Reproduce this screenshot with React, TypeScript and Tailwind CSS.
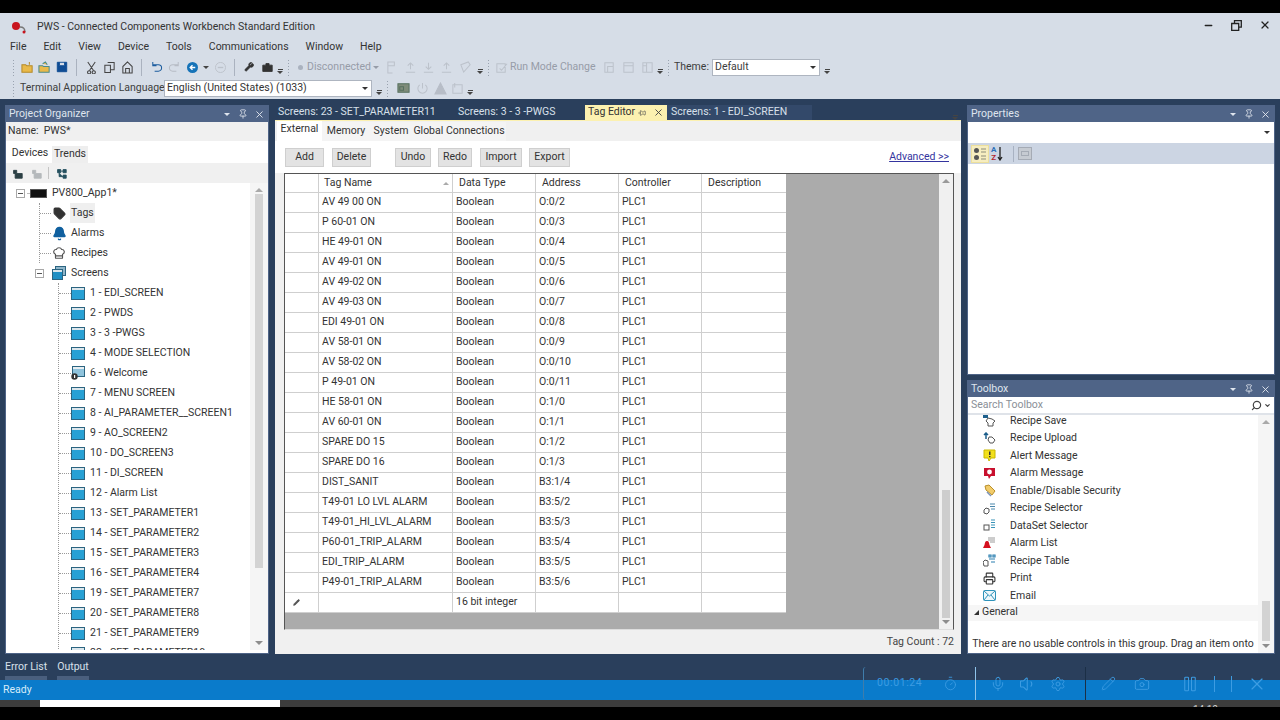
import { Bell, Camera, ChefHat, ChevronDown, Mic, Minus, Pause, Pencil, Pin, Printer, Search, Settings, Tag, Timer, Volume1, X } from "lucide-react"

const tags = [
  ["AV 49 00 ON", "O:0/2"],
  ["P 60-01 ON", "O:0/3"],
  ["HE 49-01 ON", "O:0/4"],
  ["AV 49-01 ON", "O:0/5"],
  ["AV 49-02 ON", "O:0/6"],
  ["AV 49-03 ON", "O:0/7"],
  ["EDI 49-01 ON", "O:0/8"],
  ["AV 58-01 ON", "O:0/9"],
  ["AV 58-02 ON", "O:0/10"],
  ["P 49-01 ON", "O:0/11"],
  ["HE 58-01 ON", "O:1/0"],
  ["AV 60-01 ON", "O:1/1"],
  ["SPARE DO 15", "O:1/2"],
  ["SPARE DO 16", "O:1/3"],
  ["DIST_SANIT", "B3:1/4"],
  ["T49-01 LO LVL ALARM", "B3:5/2"],
  ["T49-01_HI_LVL_ALARM", "B3:5/3"],
  ["P60-01_TRIP_ALARM", "B3:5/4"],
  ["EDI_TRIP_ALARM", "B3:5/5"],
  ["P49-01_TRIP_ALARM", "B3:5/6"],
]

const screens = [
  "1 - EDI_SCREEN",
  "2 - PWDS",
  "3 - 3 -PWGS",
  "4 - MODE SELECTION",
  "6 - Welcome",
  "7 - MENU SCREEN",
  "8 - AI_PARAMETER__SCREEN1",
  "9 - AO_SCREEN2",
  "10 - DO_SCREEN3",
  "11 - DI_SCREEN",
  "12 - Alarm List",
  "13 - SET_PARAMETER1",
  "14 - SET_PARAMETER2",
  "15 - SET_PARAMETER3",
  "16 - SET_PARAMETER4",
  "19 - SET_PARAMETER7",
  "20 - SET_PARAMETER8",
  "21 - SET_PARAMETER9",
  "22 - SET_PARAMETER10",
]

const menus = ["File", "Edit", "View", "Device", "Tools", "Communications", "Window", "Help"]

function WindowIcon() {
  return (
    <svg width="14" height="13" viewBox="0 0 14 13" className="shrink-0">
      <rect x="0.5" y="0.5" width="13" height="12" fill="#27a0d4" stroke="#2b6480" />
      <rect x="1" y="1" width="12" height="2" fill="#dbe6ec" />
    </svg>
  )
}

function WelcomeIcon() {
  return (
    <svg width="14" height="14" viewBox="0 0 14 14" className="shrink-0">
      <rect x="1.5" y="0.5" width="12" height="10" fill="#8fc3dc" stroke="#2b6480" />
      <rect x="2" y="1" width="11" height="2" fill="#e8eef2" />
      <circle cx="3.5" cy="10.5" r="3.2" fill="#333" />
      <rect x="3" y="9" width="1.2" height="3" fill="#fff" />
    </svg>
  )
}

function ScreensIcon() {
  return (
    <svg width="14" height="14" viewBox="0 0 14 14" className="shrink-0">
      <rect x="3.5" y="0.5" width="10" height="9" fill="#8fb5c9" stroke="#2b6480" />
      <rect x="0.5" y="3.5" width="10" height="10" fill="#1f8fc4" stroke="#2b6480" />
      <rect x="1" y="4" width="9" height="2" fill="#dbe6ec" />
    </svg>
  )
}

function Expander({ className }: { className?: string }) {
  return (
    <span className={`flex h-[9px] w-[9px] shrink-0 items-center justify-center border border-[#a8a8a8] bg-white ${className ?? ""}`}>
      <span className="h-px w-[5px] bg-[#555]" />
    </span>
  )
}

function Grip() {
  return <span className="mx-[3px] h-[17px] w-[4px] shrink-0 bg-[radial-gradient(#9aa3b0_1px,transparent_1px)] bg-[length:3px_3px]" />
}

function Overflow() {
  return (
    <span className="flex h-[18px] w-[8px] shrink-0 flex-col items-center justify-end pb-[2px]">
      <span className="mb-px h-px w-[5px] bg-[#444]" />
      <span className="h-0 w-0 border-x-[3px] border-t-[3px] border-x-transparent border-t-[#444]" />
    </span>
  )
}

function Sep() {
  return <span className="mx-[5px] h-[17px] w-px shrink-0 bg-[#aab2bf]" />
}

function Tb({ children, w = "w-[18px]" }: { children?: React.ReactNode; w?: string }) {
  return <span className={`flex h-[18px] shrink-0 items-center justify-center ${w}`}>{children}</span>
}

function Gly({ d, fill = "none", stroke = "#444", size = 13 }: { d: string; fill?: string; stroke?: string; size?: number }) {
  return (
    <svg width={size} height={size} viewBox="0 0 14 14">
      <path d={d} fill={fill} stroke={stroke} strokeWidth="1.1" />
    </svg>
  )
}

function PanelHeader({ title }: { title: string }) {
  return (
    <div className="flex h-[16px] shrink-0 items-center bg-[#4f6487] pl-[3px] pr-[3px] text-[#dfe5ee]">
      <span className="flex-1">{title}</span>
      <span className="mr-[8px] h-0 w-0 border-x-[3px] border-t-[3px] border-x-transparent border-t-[#dfe5ee]" />
      <Pin size={10} className="mr-[6px] text-[#e2e7ef]" />
      <X size={11} className="text-[#e2e7ef]" />
    </div>
  )
}

function ScrollBar({ thumb, top, w = "w-[16px]" }: { thumb: string; top: string; w?: string }) {
  return (
    <div className={`flex shrink-0 flex-col items-center self-stretch bg-[#f5f5f5] ${w}`}>
      <span className="mt-[5px] h-0 w-0 border-x-[4px] border-b-[4px] border-x-transparent border-b-[#a9a9a9]" />
      <div className={`flex min-h-0 w-[8px] flex-1 flex-col ${top}`}>
        <div className={`w-full shrink-0 bg-[#d3d3d3] ${thumb}`} />
      </div>
      <span className="mb-[5px] h-0 w-0 border-x-[4px] border-t-[4px] border-x-transparent border-t-[#8d8d8d]" />
    </div>
  )
}

function Btn({ label, w, ml }: { label: string; w: string; ml: string }) {
  return (
    <span className={`flex h-[19px] items-center justify-center border border-[#cfcfcf] bg-[#e3e3e3] ${w} ${ml}`}>{label}</span>
  )
}

function Cell({ w, children, border = true }: { w: string; children?: React.ReactNode; border?: boolean }) {
  return (
    <span className={`flex h-full shrink-0 items-center overflow-hidden whitespace-nowrap pl-[3px] ${w} ${border ? "border-r border-[#cfcfcf]" : ""}`}>
      {children}
    </span>
  )
}

const tools: [string, React.ReactNode][] = [
  [
    "Recipe Save",
    <svg width="13" height="13" viewBox="0 0 13 13"><rect x="0" y="0" width="5" height="4" fill="#1d5f8c" /><path d="M5 4l4 1 3 2-2 2v3H5V9L3 7z" fill="#fff" stroke="#555" /></svg>,
  ],
  [
    "Recipe Upload",
    <svg width="13" height="13" viewBox="0 0 13 13"><path d="M3 7V1M1 3l2-2 2 2" fill="none" stroke="#1d5f8c" strokeWidth="1.5" /><path d="M6 5h3l3 3-2 3H7L5 8z" fill="#fff" stroke="#555" /></svg>,
  ],
  [
    "Alert Message",
    <svg width="13" height="13" viewBox="0 0 13 13"><path d="M1 1h11v8H8l-2 3-1-3H1z" fill="#f2e01c" stroke="#c8b800" /><rect x="6" y="2.5" width="1.5" height="3.5" fill="#333" /><rect x="6" y="7" width="1.5" height="1.3" fill="#333" /></svg>,
  ],
  [
    "Alarm Message",
    <svg width="13" height="13" viewBox="0 0 13 13"><path d="M1 1h11v8H8l-2 3-1-3H1z" fill="#c8102e" /><circle cx="6.5" cy="5" r="2.4" fill="#fff" /></svg>,
  ],
  [
    "Enable/Disable Security",
    <svg width="13" height="13" viewBox="0 0 13 13"><path d="M2 2l4-1 6 6-3 4-6-5z" fill="#f2cc6a" stroke="#b98f2a" /><path d="M4 8l4 4" stroke="#7b93b8" strokeWidth="1.5" /></svg>,
  ],
  [
    "Recipe Selector",
    <svg width="13" height="13" viewBox="0 0 13 13"><path d="M1 8l2-2 3 1v3l-2 2-3-1z" fill="#fff" stroke="#555" /><path d="M7 2h5M7 4.5h5M8 7h4" stroke="#4a87ab" strokeWidth="1.2" /></svg>,
  ],
  [
    "DataSet Selector",
    <svg width="13" height="13" viewBox="0 0 13 13"><rect x="1" y="6" width="5" height="5" fill="#fff" stroke="#555" /><path d="M8 1h4M8 3.5h4M8 6h4M8 8.5h4" stroke="#3a93b8" strokeWidth="1.2" /></svg>,
  ],
  [
    "Alarm List",
    <svg width="13" height="13" viewBox="0 0 13 13"><path d="M5 1h7M5 3h7M7 5h5" stroke="#9a9a9a" strokeWidth="1" /><path d="M4 4c2 0 2 2 2.5 4L8 11H0l1.5-3C2 6 2 4 4 4z" fill="#d5101f" /></svg>,
  ],
  [
    "Recipe Table",
    <svg width="13" height="13" viewBox="0 0 13 13"><path d="M0 8l2-2 3 1v5H1z" fill="#fff" stroke="#555" /><path d="M6 1h2v2H6zM10 1h2v2h-2zM6 5h6M8 8h4" stroke="#2a7fb0" strokeWidth="1.2" fill="none" /></svg>,
  ],
  ["Print", <Printer size={13} className="text-[#333]" />],
  [
    "Email",
    <svg width="13" height="11" viewBox="0 0 13 11"><rect x="0.5" y="0.5" width="12" height="10" rx="1" fill="#eef7fb" stroke="#2f93ba" /><path d="M1 1l5.5 5L12 1M1 10l4-5M12 10L8 5" fill="none" stroke="#2f93ba" /></svg>,
  ],
]

export default function App() {
  return (
    <div className="relative flex h-[720px] w-[1280px] flex-col overflow-hidden bg-black pt-[13px] font-['Roboto','Noto_Sans',sans-serif] text-[10.5px] leading-none text-[#333]">
      <div className="flex h-[86px] shrink-0 flex-col bg-[#d6dde7]">
        {/* title bar */}
        <div className="flex h-[27px] shrink-0 items-center pb-[3px] pl-[11px] pr-[9px]">
          <svg width="16" height="12" viewBox="0 0 16 12" className="mr-[10px] mt-[5px] shrink-0">
            <circle cx="5" cy="4" r="4" fill="#c8141e" />
            <path d="M9 5c3 0 5 2 5 5" fill="none" stroke="#777" strokeWidth="1.3" />
            <circle cx="13" cy="10" r="1.5" fill="#c8141e" />
          </svg>
          <span className="mt-[5px] flex-1">PWS - Connected Components Workbench Standard Edition</span>
          <Minus size={11} strokeWidth={3} className="mr-[17px] text-[#222]" />
          <svg width="11" height="11" viewBox="0 0 11 11" className="mr-[17px]">
            <path d="M3.5 3V.7h6.800v6.500H8M.7 3.500h7v6.800H.7z" fill="none" stroke="#222" strokeWidth="1.3" />
          </svg>
          <X size={12} strokeWidth={2.4} className="text-[#222]" />
        </div>
        {/* menu */}
        <div className="flex h-[15px] shrink-0 items-center gap-[17px] pl-[10px]">
          {menus.map((m) => (
            <span key={m}>{m}</span>
          ))}
        </div>
        {/* toolbar 1 */}
        <div className="mt-[2px] flex h-[20px] shrink-0 items-center pl-[9px] text-[#3d3d3d]">
          <Grip />
          <Tb w="w-[17px]"><Gly d="M1 4h4l1 1h6v7H1zM9 1v3" fill="#e9b949" stroke="#b58a2a" /></Tb>
          <Tb w="w-[17px]"><Gly d="M1 5h4l1 1h6v6H1zM5 3l3-2 2 3" fill="#e9b949" stroke="#4c8c8c" /></Tb>
          <Tb w="w-[18px]"><Gly size={12} d="M1.5 1.500h11v11h-11zM4 1.500v4h6v-4" fill="#0f4c94" stroke="#0f4c94" /></Tb>
          <Sep />
          <Tb w="w-[18px]"><Gly d="M3 1l6 9M11 1L5 10M4.500 10.500a1.700 1.700 0 1 1-.1 0zM9.500 10.500a1.700 1.700 0 1 1-.1 0z" /></Tb>
          <Tb w="w-[18px]"><Gly d="M5 1.500h7v8H8M2 4.500h6v8H2z" /></Tb>
          <Tb w="w-[18px]"><Gly d="M7 1L2 6v7h10V6zM5 13V8h4v5" /></Tb>
          <Sep />
          <Tb w="w-[18px]"><Gly d="M3 4h6a3 3 0 0 1 0 7H5M3 1v4h4" stroke="#1b5c9e" /></Tb>
          <Tb w="w-[18px]"><Gly d="M11 4H5a3 3 0 0 0 0 7h4M11 1v4H7" stroke="#b7bcc5" /></Tb>
          <Tb w="w-[18px]">
            <svg width="11" height="11" viewBox="0 0 12 12"><circle cx="6" cy="6" r="6" fill="#1673b8" /><path d="M9 6H4M6 3.500L3.500 6 6 8.500" fill="none" stroke="#fff" strokeWidth="1.5" /></svg>
          </Tb>
          <Tb w="w-[10px]"><span className="h-0 w-0 border-x-[3px] border-t-[3px] border-x-transparent border-t-[#444]" /></Tb>
          <Tb w="w-[18px]">
            <svg width="11" height="11" viewBox="0 0 12 12"><circle cx="6" cy="6" r="5.5" fill="none" stroke="#bcc2cb" /><path d="M3 6h6" stroke="#bcc2cb" strokeWidth="1.5" /></svg>
          </Tb>
          <Sep />
          <Tb w="w-[18px]"><Gly size={10} d="M12 2L9 5 8 4l3-3a3 3 0 0 0-4 4L1 11l2 2 6-6a3 3 0 0 0 4-4z" fill="#333" stroke="#333" /></Tb>
          <Tb w="w-[18px]"><Gly size={11} d="M1 4h12v8H1zM5 4V2h4v2" fill="#333" stroke="#333" /></Tb>
          <Overflow />
          <Grip />
          <Tb w="w-[12px]"><span className="h-[5px] w-[5px] rounded-full bg-[#aab2bf]" /></Tb>
          <span className="ml-[1px] w-[62px] whitespace-nowrap text-[#969ca8]">Disconnected</span>
          <Tb w="w-[14px]"><span className="h-0 w-0 border-x-[3px] border-t-[3px] border-x-transparent border-t-[#969ca8]" /></Tb>
          <Tb w="w-[18px]"><Gly d="M2 1h7v4H2zM2 5v8h5" stroke="#bcc2cb" /></Tb>
          <Tb w="w-[18px]"><Gly d="M7 9V3M4 5l3-3 3 3M2 12h10" stroke="#bcc2cb" /></Tb>
          <Tb w="w-[18px]"><Gly d="M7 2v6M4 6l3 3 3-3M2 12h10" stroke="#bcc2cb" /></Tb>
          <Tb w="w-[18px]"><Gly d="M7 9V3M4 5l3-3 3 3M2 12h10" stroke="#bcc2cb" /></Tb>
          <Tb w="w-[21px]"><Gly d="M2 4l8-3 2 3-7 8z" stroke="#bcc2cb" /></Tb>
          <Overflow />
          <Grip />
          <Tb w="w-[15px]"><Gly d="M2 3h9v9H2zM5 8l2 2 6-7" stroke="#bcc2cb" /></Tb>
          <span className="w-[90px] whitespace-nowrap pl-[1px] text-[#969ca8]">Run Mode Change</span>
          <Tb w="w-[20px]"><Gly d="M2 2h9v10H2zM5 6h6v6H5z" stroke="#bcc2cb" /></Tb>
          <Tb w="w-[19px]"><Gly d="M2 2h10v10H2zM2 5h10" stroke="#bcc2cb" /></Tb>
          <Tb w="w-[18px]"><Gly d="M2 2h10v10H2zM2 5h4M6 2v10" stroke="#bcc2cb" /></Tb>
          <Overflow />
          <Grip />
          <span className="w-[38px]">Theme:</span>
          <span className="flex h-[17px] w-[108px] items-center justify-between border border-[#aeb5c0] bg-white pl-[2px] pr-[3px]">
            Default
            <span className="h-0 w-0 border-x-[3px] border-t-[3px] border-x-transparent border-t-[#333]" />
          </span>
          <span className="ml-[3px]"><Overflow /></span>
        </div>
        {/* toolbar 2 */}
        <div className="flex h-[22px] shrink-0 items-center pl-[9px]">
          <Grip />
          <span className="mr-[5px] w-[140px] whitespace-nowrap pl-[1px] text-[#3d3d3d]">Terminal Application Language:</span>
          <span className="flex h-[17px] w-[208px] shrink-0 items-center justify-between border border-[#aeb5c0] bg-white pl-[2px] pr-[3px]">
            English (United States) (1033)
            <span className="h-0 w-0 border-x-[3px] border-t-[3px] border-x-transparent border-t-[#333]" />
          </span>
          <span className="ml-[3px]"><Overflow /></span>
          <Grip />
          <Tb w="w-[20px]"><Gly d="M1 2h12v9H1zM3 5h4v4H3z" fill="#7f8c7a" stroke="#56705f" /></Tb>
          <Tb w="w-[18px]"><Gly d="M7 1v6M4 3a5 5 0 1 0 6 0" stroke="#bcc2cb" /></Tb>
          <Tb w="w-[18px]"><Gly d="M7 1l6 12H1z" fill="#b7bdc7" stroke="#b7bdc7" /></Tb>
          <Tb w="w-[17px]"><Gly d="M2 3h10v9H2zM4 1v5" stroke="#bcc2cb" /></Tb>
          <Overflow />
        </div>
      </div>

      {/* body */}
      <div className="flex min-h-0 flex-1 flex-col bg-[#2a3f5c]">
        <div className="flex h-[555px] shrink-0 gap-[6px] px-[5px] pt-[6px]">
          {/* project organizer */}
          <div className="flex w-[264px] shrink-0 flex-col border border-[#4f6487] bg-white">
            <PanelHeader title="Project Organizer" />
            <div className="flex h-[19px] shrink-0 items-center bg-[#f0f0f0] pl-[2px]">Name:&nbsp; PWS*</div>
            <div className="flex h-[22px] shrink-0 items-end pl-[2px]">
              <span className="flex h-[20px] w-[44px] items-center justify-center bg-white">Devices</span>
              <span className="flex h-[17px] w-[36px] items-center justify-center bg-[#eeeeee]">Trends</span>
            </div>
            <div className="flex h-[20px] shrink-0 items-center gap-[5px] bg-[#f0f0f0] pl-[4px]">
              <Tb w="w-[14px]"><Gly size={11} d="M2 3h4v4h7v6H4V7H2z" fill="#2b3f44" stroke="#2b3f44" /></Tb>
              <Tb w="w-[14px]"><Gly size={11} d="M2 3h4v4h7v6H4V7H2z" fill="#b4b8bb" stroke="#b4b8bb" /></Tb>
              <span className="h-[12px] w-px bg-[#c4c4c4]" />
              <Tb w="w-[14px]"><Gly size={11} d="M2 2h4v4H2zM9 2h4v4H9zM9 9h4v4H9zM6 4h3M4 6v5h5" fill="#24505f" stroke="#24505f" /></Tb>
            </div>
            <div className="mb-[3px] flex min-h-0 flex-1 overflow-hidden">
              <div className="min-w-0 flex-1 overflow-hidden pl-[10px]">
                <div className="flex h-[20px] items-center">
                  <Expander />
                  <span className="ml-[2px] h-px w-[3px] bg-[#bbb]" />
                  <span className="h-[9px] w-[17px] border border-[#555] bg-[#111]" />
                  <span className="ml-[5px]">PV800_App1*</span>
                </div>
                <div className="ml-[23px] flex flex-col border-l border-dotted border-[#999]">
                  {[
                    ["Tags", <Tag size={13} fill="#333" className="text-[#333]" />],
                    ["Alarms", <Bell size={15} fill="#10609f" className="text-[#10609f]" />],
                    ["Recipes", <ChefHat size={14} className="text-[#555]" />],
                  ].map(([label, icon], i) => (
                    <div key={i} className="flex h-[20px] items-center">
                      <span className="h-px w-[11px] border-t border-dotted border-[#999]" />
                      <span className="flex w-[16px] justify-center">{icon}</span>
                      <span className={`ml-[3px] px-[1px] py-[5px] ${i === 0 ? "bg-[#efefef]" : ""}`}>{label}</span>
                    </div>
                  ))}
                </div>
                <div className="ml-[19px] flex h-[20px] items-center">
                  <Expander />
                  <span className="w-[8px]" />
                  <ScreensIcon />
                  <span className="ml-[5px]">Screens</span>
                </div>
                <div className="ml-[42px] flex flex-col border-l border-dotted border-[#999]">
                  {screens.map((s, i) => (
                    <div key={s} className="flex h-[20px] shrink-0 items-center">
                      <span className="h-px w-[12px] border-t border-dotted border-[#999]" />
                      {i === 4 ? <WelcomeIcon /> : <WindowIcon />}
                      <span className="ml-[5px] whitespace-nowrap">{s}</span>
                    </div>
                  ))}
                </div>
              </div>
              <ScrollBar thumb="h-[374px]" top="pt-[2px]" w="w-[18px]" />
            </div>
          </div>

          {/* document well */}
          <div className="flex w-[686px] shrink-0 flex-col">
            <div className="flex h-[15px] shrink-0 items-center text-[#d8e0ea]">
              <span className="w-[183px] pl-[3px]">Screens: 23 - SET_PARAMETER11</span>
              <span className="w-[127px]">Screens: 3 - 3 -PWGS</span>
              <span className="flex h-full w-[82px] items-center bg-[#fcf1b0] pl-[3px] text-[#333]">
                <span className="flex-1">Tag Editor</span>
                <Pin size={8} className="mr-[7px] rotate-90 text-[#555]" />
                <X size={11} className="mr-[3px] text-[#444]" />
              </span>
              <span className="flex h-full w-[145px] items-center bg-[#33496a] pl-[4px]">Screens: 1 - EDI_SCREEN</span>
              <span className="flex flex-1 justify-end pr-[2px]"><Overflow /></span>
            </div>
            <div className="flex min-h-0 flex-1 flex-col bg-[#f0f0f0]">
              <div className="h-px shrink-0 bg-[#fcf1b0]" />
              <div className="flex h-[20px] shrink-0 items-end bg-[#f0f0f0] pl-[2px]">
                <span className="flex h-[20px] w-[45px] items-center justify-center bg-white pb-[3px]">External</span>
                <span className="flex h-[19px] w-[48px] items-center justify-center bg-[#f4f4f4]">Memory</span>
                <span className="flex h-[19px] w-[42px] items-center justify-center bg-[#f4f4f4]">System</span>
                <span className="flex h-[19px] w-[94px] items-center justify-center bg-[#f4f4f4]">Global Connections</span>
              </div>
              <div className="flex h-[32px] shrink-0 items-center bg-white pl-[10px] pr-[12px]">
                <Btn label="Add" w="w-[39px]" ml="" />
                <Btn label="Delete" w="w-[39px]" ml="ml-[8px]" />
                <Btn label="Undo" w="w-[36px]" ml="ml-[24px]" />
                <Btn label="Redo" w="w-[34px]" ml="ml-[7px]" />
                <Btn label="Import" w="w-[42px]" ml="ml-[8px]" />
                <Btn label="Export" w="w-[41px]" ml="ml-[7px]" />
                <span className="ml-auto text-[#34349e] underline">Advanced &gt;&gt;</span>
              </div>
              {/* tag grid */}
              <div className="mx-[9px] flex h-[457px] w-[670px] shrink-0 border border-[#555] border-b-[#ddd] bg-[#ababab]">
                <div className="flex w-[654px] shrink-0 flex-col">
                  <div className="flex h-[19px] w-[501px] shrink-0 items-center border-b border-[#cfcfcf] bg-white">
                    <Cell w="w-[34px]" />
                    <span className="flex h-full w-[134px] shrink-0 items-center border-r border-[#cfcfcf] pl-[3px]">
                      <span className="flex-1 pl-[2px]">Tag Name</span>
                      <span className="mr-[3px] h-0 w-0 border-x-[3px] border-b-[3px] border-x-transparent border-b-[#aaa]" />
                    </span>
                    <Cell w="w-[83px]"><span className="pl-[3px]">Data Type</span></Cell>
                    <Cell w="w-[83px]"><span className="pl-[3px]">Address</span></Cell>
                    <Cell w="w-[83px]"><span className="pl-[3px]">Controller</span></Cell>
                    <Cell w="w-[84px]" border={false}><span className="pl-[3px]">Description</span></Cell>
                  </div>
                  {tags.map(([name, addr]) => (
                    <div key={name} className="flex h-[20px] w-[501px] shrink-0 items-center border-b border-[#cfcfcf] bg-white">
                      <Cell w="w-[34px]" />
                      <Cell w="w-[134px]">{name}</Cell>
                      <Cell w="w-[83px]">Boolean</Cell>
                      <Cell w="w-[83px]">{addr}</Cell>
                      <Cell w="w-[83px]">PLC1</Cell>
                      <Cell w="w-[84px]" border={false} />
                    </div>
                  ))}
                  <div className="flex h-[20px] w-[501px] shrink-0 items-center border-b border-[#cfcfcf] bg-white">
                    <Cell w="w-[34px]">
                      <Pencil size={7} fill="#555" className="ml-[5px] text-[#555]" />
                    </Cell>
                    <Cell w="w-[134px]" />
                    <Cell w="w-[83px]">16 bit integer</Cell>
                    <Cell w="w-[83px]" />
                    <Cell w="w-[83px]" />
                    <Cell w="w-[84px]" border={false} />
                  </div>
                </div>
                <div className="flex min-w-0 flex-1 flex-col items-center bg-[#f0f0f0]">
                  <span className="mt-[5px] h-0 w-0 border-x-[4px] border-b-[4px] border-x-transparent border-b-[#999]" />
                  <div className="flex min-h-0 w-[8px] flex-1 flex-col justify-end pb-[2px]">
                    <div className="h-[128px] w-full bg-[#cdcdcd]" />
                  </div>
                  <span className="mb-[5px] h-0 w-0 border-x-[4px] border-t-[4px] border-x-transparent border-t-[#8d8d8d]" />
                </div>
              </div>
              <div className="flex flex-1 items-center justify-end pr-[7px] text-[#444]">Tag Count : 72</div>
            </div>
          </div>

          {/* right column */}
          <div className="flex w-[308px] shrink-0 flex-col gap-[5px]">
            <div className="flex h-[270px] shrink-0 flex-col border border-[#4f6487] bg-white">
              <PanelHeader title="Properties" />
              <div className="flex h-[21px] shrink-0 items-center justify-end pr-[4px]">
                <span className="h-0 w-0 border-x-[3px] border-t-[3px] border-x-transparent border-t-[#333]" />
              </div>
              <div className="flex h-[21px] shrink-0 items-center bg-[#ccd5e3] pl-[3px]">
                <span className="flex h-[18px] w-[18px] items-center justify-center border border-[#ecdf9c] bg-[#f6edc0]">
                  <svg width="14" height="14" viewBox="0 0 14 14"><circle cx="3.5" cy="3.5" r="2.5" fill="#555" /><circle cx="3.5" cy="10.5" r="2.5" fill="#555" /><path d="M8 2h5M8 5h5M8 9h5M8 12h5" stroke="#8d8d7a" /></svg>
                </span>
                <span className="ml-[2px] flex w-[18px] items-center">
                  <span className="flex flex-col text-center text-[8px] font-bold leading-[8px]"><span className="text-[#2c6fb8]">A</span><span className="text-[#b3262e]">Z</span></span>
                  <svg width="6" height="14" viewBox="0 0 6 14" className="ml-[1px]"><path d="M3 0v12M1 10l2 3 2-3" fill="none" stroke="#222" strokeWidth="1.3" /></svg>
                </span>
                <span className="mx-[4px] h-[16px] w-px bg-[#a8b2c2]" />
                <span className="flex h-[13px] w-[14px] items-center justify-center border border-[#a5abb5] bg-[#c6cbd2]">
                  <span className="h-[5px] w-[8px] border border-[#a5abb5]" />
                </span>
              </div>
            </div>
            <div className="flex min-h-0 flex-1 flex-col border border-[#4f6487] bg-white">
              <PanelHeader title="Toolbox" />
              <div className="flex h-[18px] shrink-0 items-center border-b-2 border-[#dfe3e9] pl-[3px] pr-[3px] text-[#8a8f97]">
                <span className="flex-1">Search Toolbox</span>
                <Search size={11} strokeWidth={2.6} className="-scale-x-100 text-[#444]" />
                <ChevronDown size={7} strokeWidth={4} className="ml-[2px] text-[#444]" />
              </div>
              <div className="flex min-h-0 flex-1 overflow-hidden">
                <div className="flex min-w-0 flex-1 flex-col overflow-hidden">
                  <div className="-mt-[3px] flex flex-col">
                    {tools.map(([label, icon]) => (
                      <div key={label} className="flex h-[17.5px] shrink-0 items-center">
                        <span className="ml-[15px] flex w-[13px] justify-center">{icon}</span>
                        <span className="ml-[14px]">{label}</span>
                      </div>
                    ))}
                    <div className="flex h-[16px] shrink-0 items-center bg-[#f6f6f6] pl-[6px]">
                      <span className="mr-[3px] h-0 w-0 border-b-[5px] border-l-[5px] border-b-[#333] border-l-transparent" />
                      General
                    </div>
                    <div className="mt-[15px] px-[4px] text-center leading-[15px]">
                      There are no usable controls in this group. Drag an item onto this text to add it to the toolbox.
                    </div>
                  </div>
                </div>
                <ScrollBar thumb="h-[40px]" top="justify-end pb-[3px]" w="w-[16px]" />
              </div>
            </div>
          </div>
        </div>
        {/* bottom tool tabs */}
        <div className="flex h-[26px] shrink-0 items-start gap-[10px] pl-[5px] pt-[8px] text-[#d8e0ea]">
          <span className="flex h-[18px] flex-col justify-between">
            Error List
            <span className="h-[4px] w-full bg-[#4a5f7e]" />
          </span>
          <span className="flex h-[18px] flex-col justify-between">
            Output
            <span className="h-[4px] w-full bg-[#4a5f7e]" />
          </span>
        </div>
      </div>

      {/* status bar */}
      <div className="flex h-[20px] shrink-0 items-center bg-[#0a7bcb] pl-[3px] text-[#d6ecfa]">Ready</div>
      <div className="flex h-[7px] shrink-0 overflow-hidden bg-[#3c3c3c]">
        <span className="ml-[40px] h-full w-[240px] bg-white" />
        <span className="ml-[913px] pt-[5px] text-[10px] text-[#cfcfcf]">14:10</span>
      </div>
      <div className="h-[13px] shrink-0 bg-black" />

      {/* screen recorder overlay */}
      <div className="absolute left-[863px] top-[667px] flex h-[33px] w-[417px] items-center text-[#3d9ce2]">
        <div className="flex h-full w-[112px] items-center rounded-l-[3px] border-l border-[#3f7dab] pl-[13px]">
          <span className="w-[66px] text-[10.5px] tracking-[0.6px]">00:01:24</span>
          <Timer size={15} strokeWidth={1.4} />
        </div>
        <div className="flex h-full w-[110px] items-center gap-[13px] border-l border-[#8fc4ea] pl-[14px]">
          <Mic size={16} strokeWidth={1.4} />
          <Volume1 size={18} strokeWidth={1.4} />
          <Settings size={16} strokeWidth={1.4} />
        </div>
        <div className="flex h-full flex-1 items-center border-l border-[#1b2f46] pl-[15px]">
          <Pencil size={15} strokeWidth={1.4} />
          <Camera size={16} strokeWidth={1.4} className="ml-[18px]" />
          <Pause size={18} strokeWidth={1.4} className="ml-[31px]" />
          <span className="ml-[15px] h-[16px] w-px bg-[#3d9ce2]" />
          <span className="ml-[16px] h-[16px] w-px bg-[#3d9ce2]" />
          <X size={20} strokeWidth={1.4} className="ml-[15px]" />
        </div>
      </div>
    </div>
  )
}
